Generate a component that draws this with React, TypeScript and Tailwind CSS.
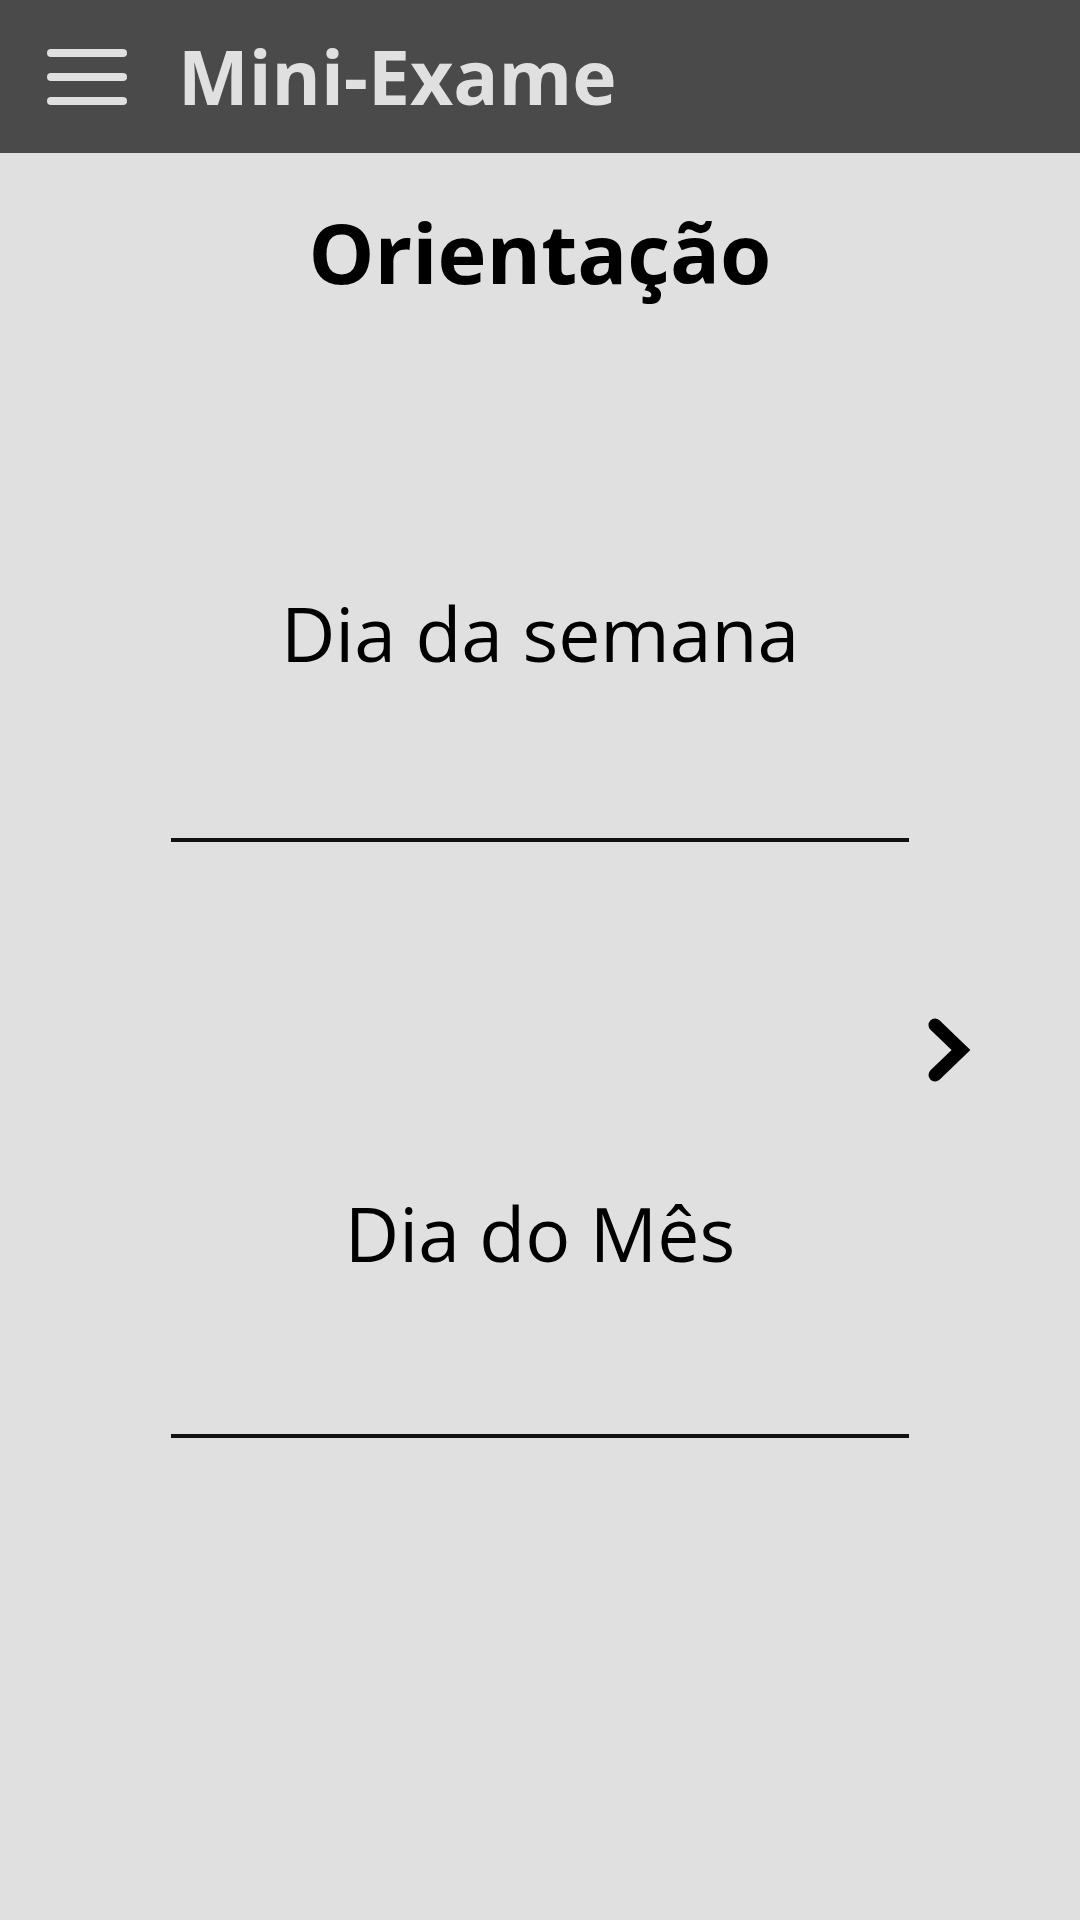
import React from "react";

export default function App() {
  return (
    <div
      className="relative w-[1080px] h-[1920px] bg-[#e0e0e0] overflow-hidden"
      style={{ fontFamily: "'Open Sans', 'DejaVu Sans', sans-serif" }}
    >
      <header className="h-[153px] bg-[#4a4a4a] flex items-center pl-[47px]">
        <div className="flex flex-col gap-4">
          <div className="h-2 w-[80px] rounded-full bg-[#e0e0e0]" />
          <div className="h-2 w-[80px] rounded-full bg-[#e0e0e0]" />
          <div className="h-2 w-[80px] rounded-full bg-[#e0e0e0]" />
        </div>
        <h1 className="ml-[51px] text-[75px] leading-none font-bold text-[#e0e0e0]">
          Mini-Exame
        </h1>
      </header>

      <main className="flex flex-col items-center">
        <h2 className="mt-[57px] text-[83px] leading-none font-bold text-black">
          Orientação
        </h2>

        <div className="mt-[303px] text-[75px] leading-none text-black">
          Dia da semana
        </div>
        <div className="mt-[167px] w-[738px] h-[4px] bg-[#111111]" />

        <div className="mt-[354px] text-[75px] leading-none text-black">
          Dia do Mês
        </div>
        <div className="mt-[163px] w-[738px] h-[4px] bg-[#111111]" />
      </main>

      <button className="absolute left-[928px] top-[1018px] w-[43px] h-[64px]">
        <svg width="43" height="64" viewBox="0 0 43 64">
          <path
            d="M7 7 L33 32 L7 57"
            fill="none"
            stroke="#000"
            strokeWidth="13"
            strokeLinecap="round"
            strokeLinejoin="miter"
          />
        </svg>
      </button>
    </div>
  );
}
